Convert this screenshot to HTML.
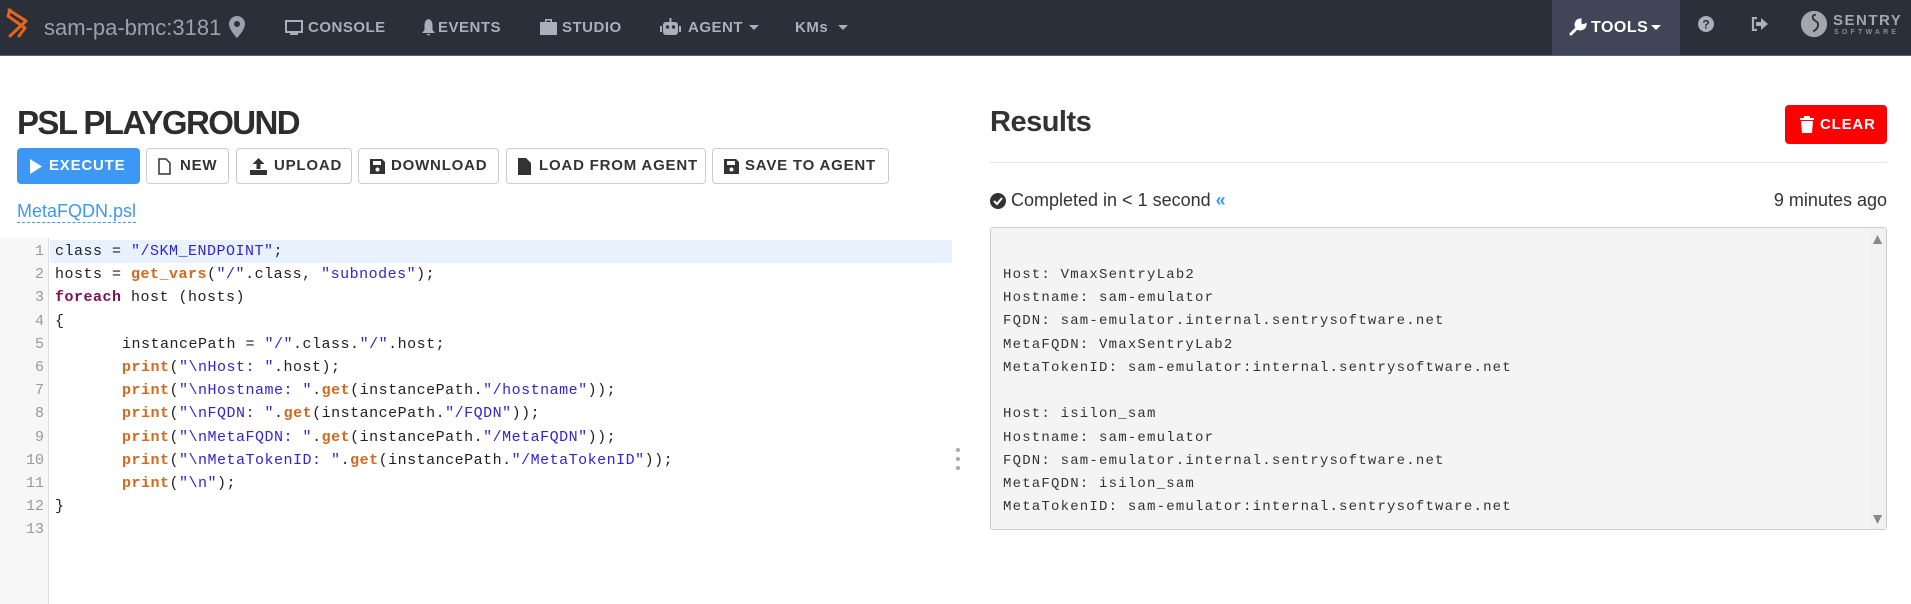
<!DOCTYPE html>
<html><head><meta charset="utf-8"><style>
*{margin:0;padding:0;box-sizing:border-box}
body{width:1911px;height:604px;overflow:hidden;background:#fff;font-family:"Liberation Sans",sans-serif;position:relative;color:#333}
.nav{position:absolute;left:0;top:0;width:1911px;height:56px;background:#2b2f3a;border-bottom:1px solid #5a6478}
.nav .t{position:absolute;top:0;height:56px;line-height:56px;color:#a8afbd;font-weight:bold;font-size:15px;letter-spacing:0.5px}
.nav svg{position:absolute}
.tools{position:absolute;left:1552px;top:0;width:128px;height:55px;background:#404657}
.btn{position:absolute;top:148px;height:36px;border:1px solid #ccc;border-radius:4px;background:#fff;font-weight:bold;font-size:15px;letter-spacing:0.8px;color:#333;line-height:34px;padding-left:32px}
.btn svg{position:absolute;left:11px;top:9px}
.code{position:absolute;left:0;top:238px;width:952px;height:366px}
.gut{position:absolute;left:0;top:0;width:49px;height:366px;background:#f7f7f7;border-right:1px solid #ddd}
.ln{position:absolute;left:0;width:44px;text-align:right;color:#999;font-family:"Liberation Mono",monospace;font-size:15px;height:23.2px;line-height:23.2px}
.cl{position:absolute;left:55px;font-family:"Liberation Mono",monospace;font-size:15px;letter-spacing:0.5px;height:23.2px;line-height:23.2px;white-space:pre;color:#222}
.s{color:#3224d4}.f{color:#d2691e;font-weight:bold}.k{color:#7b1050;font-weight:bold}
.res{position:absolute;left:990px;top:227px;width:897px;height:303px;background:#f4f4f4;border:1px solid #ccc;border-radius:3px}
.rl{position:absolute;left:12px;font-family:"Liberation Mono",monospace;font-size:14px;letter-spacing:1.2px;color:#333;white-space:pre}
</style></head><body>
<div class="nav">
<svg style="left:4px;top:7px" width="26" height="32" viewBox="0 0 26 32"><path d="M5 3 L22 14 L6 29 M6 3 L4 9 L21 21 L15 29" fill="none" stroke="#e8641b" stroke-width="3" stroke-linejoin="round" stroke-linecap="round"/></svg>
<div class="t" style="left:44px;font-weight:normal;font-size:22px;letter-spacing:0;color:#9aa1ae">sam-pa-bmc:3181</div>
<svg style="left:229px;top:16px" width="16" height="22" viewBox="0 0 16 22"><path d="M8 0a8 8 0 0 0-8 8c0 6 8 14 8 14s8-8 8-14a8 8 0 0 0-8-8zm0 11a3 3 0 1 1 0-6 3 3 0 0 1 0 6z" fill="#9aa1ae"/></svg>
<svg style="left:285px;top:20px" width="18" height="16" viewBox="0 0 18 16"><rect x="1" y="1" width="16" height="11" fill="none" stroke="#a8afbd" stroke-width="2"/><rect x="5" y="13" width="8" height="2" fill="#a8afbd"/></svg>
<div class="t" style="left:308px">CONSOLE</div>
<svg style="left:422px;top:19px" width="13" height="17" viewBox="0 0 13 17"><path d="M6.5 0C3 1 2.5 4 2.5 7v4L0 14h13l-2.5-3V7C10.5 4 10 1 6.5 0zM5 15h3a1.5 1.5 0 0 1-3 0z" fill="#a8afbd"/></svg>
<div class="t" style="left:438px">EVENTS</div>
<svg style="left:540px;top:19px" width="17" height="16" viewBox="0 0 17 16"><path d="M5 0h7v3h5v13H0V3h5zM6.5 1.5v1.5h4V1.5zM0 8h17v2H0z" fill="#a8afbd"/></svg>
<div class="t" style="left:562px">STUDIO</div>
<svg style="left:660px;top:17px" width="21" height="19" viewBox="0 0 21 19"><rect x="3" y="5" width="15" height="13" rx="3" fill="#a8afbd"/><rect x="0" y="9" width="2" height="6" fill="#a8afbd"/><rect x="19" y="9" width="2" height="6" fill="#a8afbd"/><rect x="9.5" y="1" width="2" height="4" fill="#a8afbd"/><circle cx="7.5" cy="10" r="1.7" fill="#2b2f3a"/><circle cx="13.5" cy="10" r="1.7" fill="#2b2f3a"/></svg>
<div class="t" style="left:688px">AGENT</div>
<svg style="left:749px;top:25px" width="10" height="6"><path d="M0 0h10L5 5z" fill="#a8afbd"/></svg>
<div class="t" style="left:795px">KMs</div>
<svg style="left:838px;top:25px" width="10" height="6"><path d="M0 0h10L5 5z" fill="#a8afbd"/></svg>
<div class="tools"></div>
<svg style="left:1569px;top:18px" width="18" height="18" viewBox="0 0 18 18"><path d="M2 16 L10 8 M11 2a4.5 4.5 0 1 0 5 5l-3 1-2-2z" stroke="#fff" stroke-width="3" fill="#fff" stroke-linecap="round"/></svg>
<div class="t" style="left:1591px;color:#fff;font-size:16px">TOOLS</div>
<svg style="left:1651px;top:25px" width="10" height="6"><path d="M0 0h10L5 5z" fill="#fff"/></svg>
<svg style="left:1698px;top:16px" width="16" height="16" viewBox="0 0 16 16"><circle cx="8" cy="8" r="8" fill="#a8afbd"/><text x="8" y="12.5" font-size="12" font-weight="bold" text-anchor="middle" fill="#2b2f3a" font-family="Liberation Sans">?</text></svg>
<svg style="left:1751px;top:17px" width="17" height="14" viewBox="0 0 17 14"><path d="M6 1H2v12h4" fill="none" stroke="#a8afbd" stroke-width="2.2"/><path d="M5 5h5V1l7 6-7 6V9H5z" fill="#a8afbd"/></svg>
<svg style="left:1800px;top:10px" width="28" height="28" viewBox="0 0 30 30"><circle cx="15" cy="15" r="14" fill="#a3a6ad"/><path d="M17 5c-5 0-4 5 0 7s3 8-3 11" fill="none" stroke="#2b2f3a" stroke-width="2"/></svg>
<div style="position:absolute;left:1833px;top:12px;color:#a3a6ad;font-weight:bold;font-size:15px;letter-spacing:1.5px">SENTRY</div>
<div style="position:absolute;left:1834px;top:29px;color:#8a8d94;font-weight:bold;font-size:7px;letter-spacing:3.2px">SOFTWARE</div>
</div>

<div style="position:absolute;left:17px;top:104px;font-size:33px;font-weight:bold;color:#2d2d2d;letter-spacing:-1.6px">PSL PLAYGROUND</div>
<div class="btn" style="left:17px;width:123px;background:#3d98f5;border-color:#3d98f5;color:#fff;padding-left:31px"><svg width="14" height="17" style="left:11px;top:9px"><path d="M1 1l12 7.5L1 16z" fill="#fff"/></svg>EXECUTE</div>
<div class="btn" style="left:146px;width:83px;padding-left:33px"><svg width="13" height="17"><path d="M1 1h7l4 4v11H1z" fill="none" stroke="#333" stroke-width="1.5"/></svg>NEW</div>
<div class="btn" style="left:236px;width:116px;padding-left:37px"><svg width="17" height="17" style="left:13px"><path d="M8.5 0l6 6h-4v5h-4V6h-4zM0 12h17v5H0z" fill="#333"/></svg>UPLOAD</div>
<div class="btn" style="left:358px;width:141px"><svg width="15" height="15" style="top:10px"><path d="M0 0h12l3 3v12H0z" fill="#333"/><rect x="3" y="2" width="8" height="4" fill="#fff"/><circle cx="7.5" cy="10.5" r="2" fill="#fff"/></svg>DOWNLOAD</div>
<div class="btn" style="left:506px;width:200px"><svg width="13" height="17"><path d="M0 0h8l5 5v12H0z" fill="#333"/></svg>LOAD FROM AGENT</div>
<div class="btn" style="left:712px;width:177px"><svg width="15" height="15" style="top:10px"><path d="M0 0h12l3 3v12H0z" fill="#333"/><rect x="3" y="2" width="8" height="4" fill="#fff"/><circle cx="7.5" cy="10.5" r="2" fill="#fff"/></svg>SAVE TO AGENT</div>
<div style="position:absolute;left:17px;top:200px;font-size:18px;color:#3d98f5;border-bottom:1px dashed #3d98f5;line-height:22px">MetaFQDN.psl</div>

<div class="code">
<div class="gut"></div>
<div style="position:absolute;left:50px;top:2px;width:902px;height:23.2px;background:#e8f2fe"></div>
<div class="ln" style="top:2px">1</div><div class="ln" style="top:25.2px">2</div><div class="ln" style="top:48.4px">3</div><div class="ln" style="top:71.6px">4</div><div class="ln" style="top:94.8px">5</div><div class="ln" style="top:118px">6</div><div class="ln" style="top:141.2px">7</div><div class="ln" style="top:164.4px">8</div><div class="ln" style="top:187.6px">9</div><div class="ln" style="top:210.8px">10</div><div class="ln" style="top:234px">11</div><div class="ln" style="top:257.2px">12</div><div class="ln" style="top:280.4px">13</div>
<div class="cl" style="top:2px">class = <span class="s">"/SKM_ENDPOINT"</span>;</div>
<div class="cl" style="top:25.2px">hosts = <span class="f">get_vars</span>(<span class="s">"/"</span>.class, <span class="s">"subnodes"</span>);</div>
<div class="cl" style="top:48.4px"><span class="k">foreach</span> host (hosts)</div>
<div class="cl" style="top:71.6px">{</div>
<div class="cl" style="top:94.8px;left:122px">instancePath = <span class="s">"/"</span>.class.<span class="s">"/"</span>.host;</div>
<div class="cl" style="top:118px;left:122px"><span class="f">print</span>(<span class="s">"\nHost: "</span>.host);</div>
<div class="cl" style="top:141.2px;left:122px"><span class="f">print</span>(<span class="s">"\nHostname: "</span>.<span class="f">get</span>(instancePath.<span class="s">"/hostname"</span>));</div>
<div class="cl" style="top:164.4px;left:122px"><span class="f">print</span>(<span class="s">"\nFQDN: "</span>.<span class="f">get</span>(instancePath.<span class="s">"/FQDN"</span>));</div>
<div class="cl" style="top:187.6px;left:122px"><span class="f">print</span>(<span class="s">"\nMetaFQDN: "</span>.<span class="f">get</span>(instancePath.<span class="s">"/MetaFQDN"</span>));</div>
<div class="cl" style="top:210.8px;left:122px"><span class="f">print</span>(<span class="s">"\nMetaTokenID: "</span>.<span class="f">get</span>(instancePath.<span class="s">"/MetaTokenID"</span>));</div>
<div class="cl" style="top:234px;left:122px"><span class="f">print</span>(<span class="s">"\n"</span>);</div>
<div class="cl" style="top:257.2px">}</div>
</div>
<div style="position:absolute;left:956px;top:448px;width:4px;height:4px;border-radius:2px;background:#aaa"></div>
<div style="position:absolute;left:956px;top:457px;width:4px;height:4px;border-radius:2px;background:#aaa"></div>
<div style="position:absolute;left:956px;top:466px;width:4px;height:4px;border-radius:2px;background:#aaa"></div>

<div style="position:absolute;left:990px;top:106px;font-size:29px;font-weight:bold;color:#333;letter-spacing:-0.5px">Results</div>
<div style="position:absolute;left:1785px;top:105px;width:102px;height:39px;background:#ff0000;border-radius:4px;color:#fff;font-weight:bold;font-size:15px;letter-spacing:0.8px;line-height:39px;padding-left:35px"><svg style="position:absolute;left:15px;top:11px" width="14" height="17"><path d="M0 2h14v2H0zM4 0h6v2H4zM1 5h12l-1 12H2z" fill="#fff"/></svg>CLEAR</div>
<div style="position:absolute;left:990px;top:162px;width:897px;height:1px;background:#e5e5e5"></div>
<svg style="position:absolute;left:990px;top:193px" width="16" height="16"><circle cx="8" cy="8" r="8" fill="#333"/><path d="M4 8l3 3 5-6" stroke="#fff" stroke-width="2" fill="none"/></svg>
<div style="position:absolute;left:1011px;top:190px;font-size:18px;color:#333">Completed in &lt; 1 second <span style="color:#3d98f5;font-weight:bold">«</span></div>
<div style="position:absolute;right:24px;top:190px;font-size:18px;color:#333">9 minutes ago</div>
<div class="res">
<div class="rl" style="top:39px">Host: VmaxSentryLab2</div>
<div class="rl" style="top:62px">Hostname: sam-emulator</div>
<div class="rl" style="top:85px">FQDN: sam-emulator.internal.sentrysoftware.net</div>
<div class="rl" style="top:109px">MetaFQDN: VmaxSentryLab2</div>
<div class="rl" style="top:132px">MetaTokenID: sam-emulator:internal.sentrysoftware.net</div>
<div class="rl" style="top:178px">Host: isilon_sam</div>
<div class="rl" style="top:202px">Hostname: sam-emulator</div>
<div class="rl" style="top:225px">FQDN: sam-emulator.internal.sentrysoftware.net</div>
<div class="rl" style="top:248px">MetaFQDN: isilon_sam</div>
<div class="rl" style="top:271px">MetaTokenID: sam-emulator:internal.sentrysoftware.net</div>
<div style="position:absolute;right:0;top:0;width:17px;height:301px;background:#f1f1f1"></div>
<svg style="position:absolute;right:4px;top:7px" width="9" height="9"><path d="M4.5 0L9 9H0z" fill="#888"/></svg>
<svg style="position:absolute;right:4px;top:287px" width="9" height="9"><path d="M0 0h9L4.5 9z" fill="#888"/></svg>
</div>
</body></html>
